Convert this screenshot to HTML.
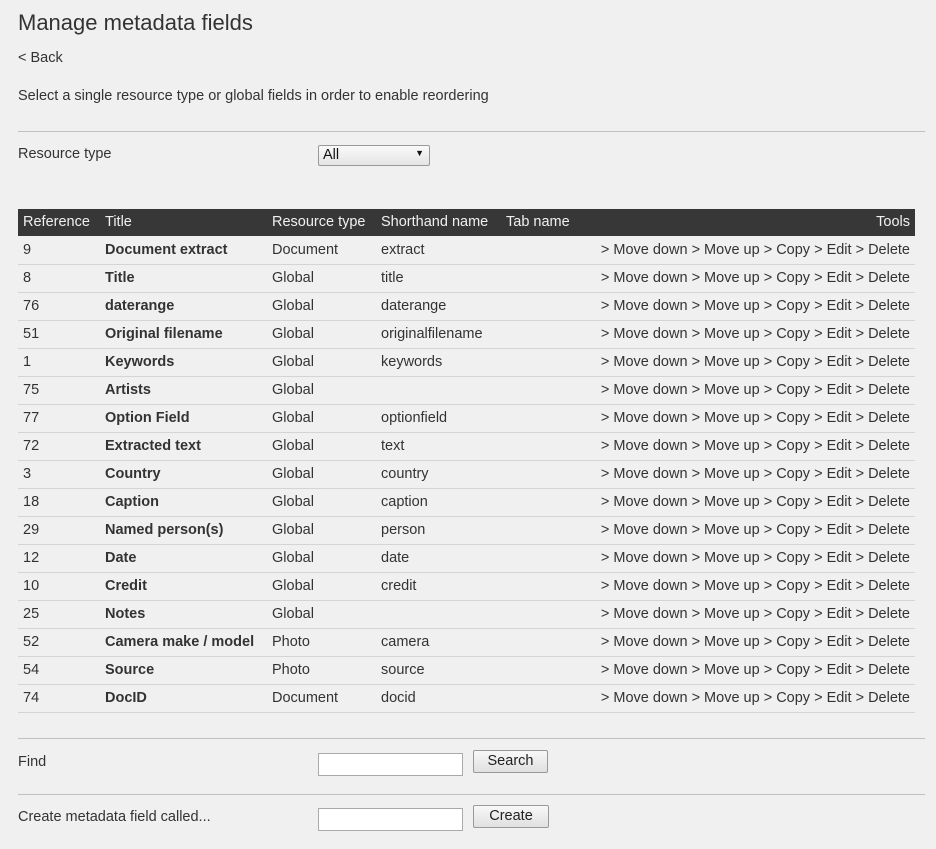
<!DOCTYPE html>
<html><head><meta charset="utf-8"><style>
body{margin:0;background:#f0f0f0;font-family:"Liberation Sans","DejaVu Sans",sans-serif;color:#333;font-size:14.5px;width:936px;height:849px;position:relative;overflow:hidden}
.a{position:absolute;white-space:nowrap}
h1{position:absolute;left:18px;top:10px;margin:0;font-weight:normal;font-size:22px;color:#333}
.hr{position:absolute;left:18px;width:907px;height:1px;background:#c0c0c0}
.hd{position:absolute;left:18px;top:209px;width:897px;height:27px;background:#373737;color:#f0f0f0}
.r{position:absolute;left:18px;width:897px;height:27px;border-bottom:1px solid #d4d4d4}
.r div,.hd div{position:absolute;top:0;line-height:27px;white-space:nowrap}
.c1{left:5px}.c2{left:87px}.c3{left:254px}.c4{left:363px}.c5{left:488px}.t{right:5px}
.c2b{left:87px;font-weight:bold}
.inp{position:absolute;left:318px;width:143px;height:21px;background:#fff;border:1px solid #aaa}
.btn{position:absolute;left:473px;height:21px;border:1px solid #999;border-radius:2px;background:linear-gradient(#f8f8f8,#e0e0e0);text-align:center;line-height:21px;color:#222;font-size:14.5px}
</style></head><body>
<h1>Manage metadata fields</h1>
<div class="a" style="left:18px;top:50px">&lt; Back</div>
<div class="a" style="left:18px;top:88px">Select a single resource type or global fields in order to enable reordering</div>
<div class="hr" style="top:131px"></div>
<div class="a" style="left:18px;top:146px">Resource type</div>
<div style="position:absolute;left:318px;top:145px;width:110px;height:19px;border:1px solid #999;border-radius:2px;background:linear-gradient(#fafafa,#e4e4e4)"><span class="a" style="left:4px;top:1px;color:#111">All</span><span class="a" style="right:5px;top:2px;font-size:9px;color:#111">▼</span></div>
<div class="hd"><div class="c1">Reference</div><div class="c2">Title</div><div class="c3">Resource type</div><div class="c4">Shorthand name</div><div class="c5">Tab name</div><div class="t">Tools</div></div>

<div class="r" style="top:237px"><div class="c1">9</div><div class="c2b">Document extract</div><div class="c3">Document</div><div class="c4">extract</div><div class="t">&gt; Move down &gt; Move up &gt; Copy &gt; Edit &gt; Delete</div></div>
<div class="r" style="top:265px"><div class="c1">8</div><div class="c2b">Title</div><div class="c3">Global</div><div class="c4">title</div><div class="t">&gt; Move down &gt; Move up &gt; Copy &gt; Edit &gt; Delete</div></div>
<div class="r" style="top:293px"><div class="c1">76</div><div class="c2b">daterange</div><div class="c3">Global</div><div class="c4">daterange</div><div class="t">&gt; Move down &gt; Move up &gt; Copy &gt; Edit &gt; Delete</div></div>
<div class="r" style="top:321px"><div class="c1">51</div><div class="c2b">Original filename</div><div class="c3">Global</div><div class="c4">originalfilename</div><div class="t">&gt; Move down &gt; Move up &gt; Copy &gt; Edit &gt; Delete</div></div>
<div class="r" style="top:349px"><div class="c1">1</div><div class="c2b">Keywords</div><div class="c3">Global</div><div class="c4">keywords</div><div class="t">&gt; Move down &gt; Move up &gt; Copy &gt; Edit &gt; Delete</div></div>
<div class="r" style="top:377px"><div class="c1">75</div><div class="c2b">Artists</div><div class="c3">Global</div><div class="c4"></div><div class="t">&gt; Move down &gt; Move up &gt; Copy &gt; Edit &gt; Delete</div></div>
<div class="r" style="top:405px"><div class="c1">77</div><div class="c2b">Option Field</div><div class="c3">Global</div><div class="c4">optionfield</div><div class="t">&gt; Move down &gt; Move up &gt; Copy &gt; Edit &gt; Delete</div></div>
<div class="r" style="top:433px"><div class="c1">72</div><div class="c2b">Extracted text</div><div class="c3">Global</div><div class="c4">text</div><div class="t">&gt; Move down &gt; Move up &gt; Copy &gt; Edit &gt; Delete</div></div>
<div class="r" style="top:461px"><div class="c1">3</div><div class="c2b">Country</div><div class="c3">Global</div><div class="c4">country</div><div class="t">&gt; Move down &gt; Move up &gt; Copy &gt; Edit &gt; Delete</div></div>
<div class="r" style="top:489px"><div class="c1">18</div><div class="c2b">Caption</div><div class="c3">Global</div><div class="c4">caption</div><div class="t">&gt; Move down &gt; Move up &gt; Copy &gt; Edit &gt; Delete</div></div>
<div class="r" style="top:517px"><div class="c1">29</div><div class="c2b">Named person(s)</div><div class="c3">Global</div><div class="c4">person</div><div class="t">&gt; Move down &gt; Move up &gt; Copy &gt; Edit &gt; Delete</div></div>
<div class="r" style="top:545px"><div class="c1">12</div><div class="c2b">Date</div><div class="c3">Global</div><div class="c4">date</div><div class="t">&gt; Move down &gt; Move up &gt; Copy &gt; Edit &gt; Delete</div></div>
<div class="r" style="top:573px"><div class="c1">10</div><div class="c2b">Credit</div><div class="c3">Global</div><div class="c4">credit</div><div class="t">&gt; Move down &gt; Move up &gt; Copy &gt; Edit &gt; Delete</div></div>
<div class="r" style="top:601px"><div class="c1">25</div><div class="c2b">Notes</div><div class="c3">Global</div><div class="c4"></div><div class="t">&gt; Move down &gt; Move up &gt; Copy &gt; Edit &gt; Delete</div></div>
<div class="r" style="top:629px"><div class="c1">52</div><div class="c2b">Camera make / model</div><div class="c3">Photo</div><div class="c4">camera</div><div class="t">&gt; Move down &gt; Move up &gt; Copy &gt; Edit &gt; Delete</div></div>
<div class="r" style="top:657px"><div class="c1">54</div><div class="c2b">Source</div><div class="c3">Photo</div><div class="c4">source</div><div class="t">&gt; Move down &gt; Move up &gt; Copy &gt; Edit &gt; Delete</div></div>
<div class="r" style="top:685px"><div class="c1">74</div><div class="c2b">DocID</div><div class="c3">Document</div><div class="c4">docid</div><div class="t">&gt; Move down &gt; Move up &gt; Copy &gt; Edit &gt; Delete</div></div>

<div class="hr" style="top:738px"></div>
<div class="a" style="left:18px;top:754px">Find</div>
<div class="inp" style="top:753px"></div>
<div class="btn" style="top:750px;width:73px">Search</div>
<div class="hr" style="top:794px"></div>
<div class="a" style="left:18px;top:809px">Create metadata field called...</div>
<div class="inp" style="top:808px"></div>
<div class="btn" style="top:805px;width:74px">Create</div>
</body></html>
